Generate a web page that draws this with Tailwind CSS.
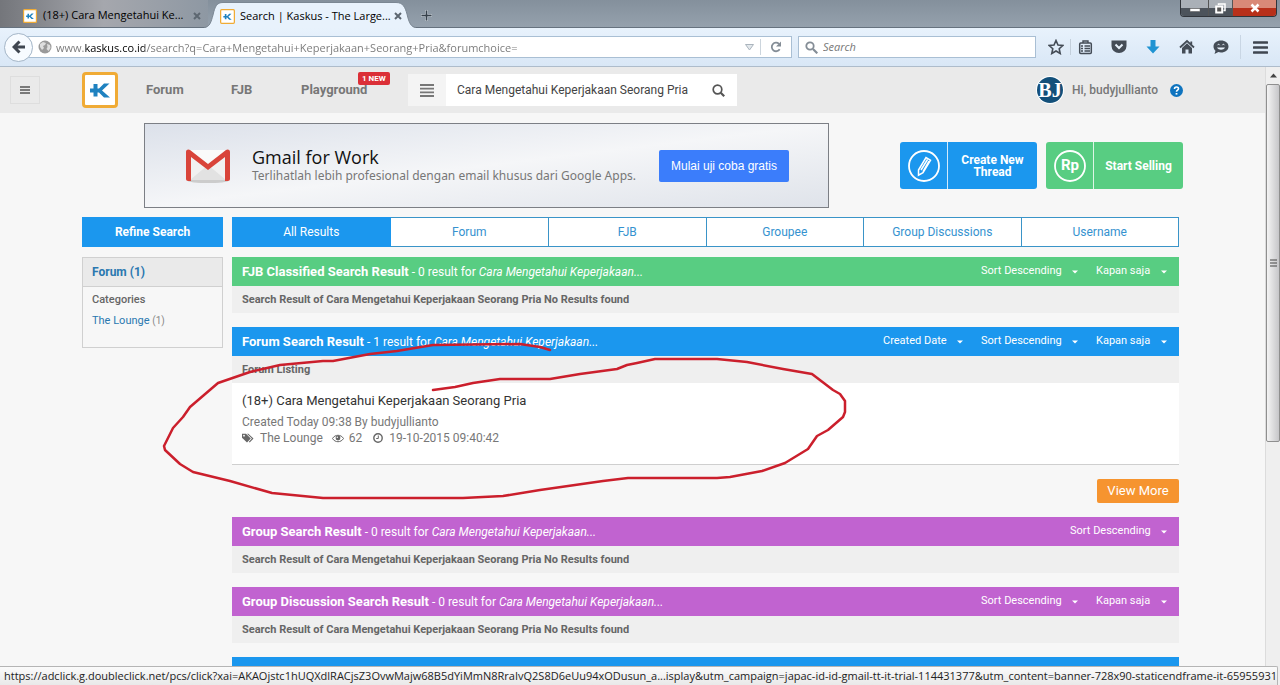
<!DOCTYPE html>
<html lang="id">
<head>
<meta charset="utf-8">
<title>Search | Kaskus - The Largest Indonesian Community</title>
<meta name="viewport" content="width=device-width, initial-scale=1">
<script src="https://cdn.jsdelivr.net/npm/@tailwindcss/browser@4"></script>
</head>
<body class="relative flex h-screen flex-col overflow-hidden bg-[#f7f7f7] font-['Roboto',sans-serif] text-xs text-[#666]">

<svg class="hidden" aria-hidden="true">
  <symbol id="kaskus" viewBox="0 0 36 36"><rect x="1.500" y="1.500" width="33" height="33" rx="2.500" fill="#fff" stroke="#f0ab35" stroke-width="3"/><path d="M8 16.500h3.500V12h4v4.500h1.500L22 11.500h5.500L20 18.500l8 7h-6l-5-5h-1.500v4h-4v-4H8z" fill="#1f82c0"/></symbol>
  <symbol id="close" viewBox="0 0 8 8"><path d="M1 1l6 6M7 1L1 7" stroke="#5d6771" stroke-width="2" fill="none"/></symbol>
  <symbol id="caret" viewBox="0 0 6 4"><path d="M0 .5h6L3 3.500z" fill="#fff"/></symbol>
</svg>

<!-- Tab strip -->
<div class="relative flex h-7 shrink-0 items-stretch border-b border-[#66727f] bg-linear-to-b from-[#84909c] to-[#95a1ad] font-['Open_Sans',sans-serif] text-[11px] text-black">
  <div class="flex w-[208px] items-center bg-linear-to-r from-[#74767b] via-[#a5a7ad] to-[#8e98a3] pt-1 pl-[23px]">
    <svg class="size-[14px] shrink-0" aria-hidden="true"><use href="#kaskus"/></svg>
    <a href="#" class="ml-[6px] w-[146px] whitespace-nowrap">(18+) Cara Mengetahui Ke...</a>
    <button aria-label="Close tab" class="ml-1"><svg class="size-2"><use href="#close"/></svg></button>
  </div>
  <div class="relative z-10 -mb-px flex w-[204px] items-center pt-1 pl-3">
    <svg class="absolute top-0 -left-1 h-7 w-[212px]" viewBox="0 0 212 28" preserveAspectRatio="none" aria-hidden="true"><path d="M0 28C6 27 7 22 9 15C11 6 13 2.500 19 2.500H192C199 2.500 201 7 203 14C205 23 207 27 212 28z" fill="#e8f2fc"/><path d="M0 27.500C6 27 7 22 9 15C11 6 13 2.500 19 2.500H192C199 2.500 201 7 203 14C205 23 207 27 212 27.500" fill="none" stroke="#7b8793"/></svg>
    <svg class="relative size-[15px] shrink-0" aria-hidden="true"><use href="#kaskus"/></svg>
    <a href="#" class="relative ml-[5px] w-[152px] whitespace-nowrap">Search | Kaskus - The Large...</a>
    <button aria-label="Close tab" class="relative ml-[2px]"><svg class="size-2"><use href="#close"/></svg></button>
  </div>
  <button aria-label="New tab" class="ml-[9px] pt-1"><svg class="size-[11px]" viewBox="0 0 11 11"><path d="M5.500 0v11M0 5.500h11" stroke="#eef2f6" stroke-width="3" opacity=".5"/><path d="M5.500 .5v10M.5 5.500h10" stroke="#37414b" stroke-width="1.500"/></svg></button>
  <div class="mr-[3px] ml-auto flex h-[17px] overflow-hidden rounded-b-[4px] border border-t-0 border-[#30343a]">
    <button aria-label="Minimize" class="flex w-7 items-end justify-center border-r border-[#555] bg-linear-to-b from-[#aab0b7] from-50% to-[#4c535b] to-50% pb-1"><svg class="h-1 w-3" viewBox="0 0 12 4"><rect x="1" y=".5" width="10" height="3" fill="#fff" stroke="#555" stroke-width=".5"/></svg></button>
    <button aria-label="Restore" class="flex w-6 items-center justify-center border-r border-[#555] bg-linear-to-b from-[#aab0b7] from-50% to-[#4c535b] to-50%"><svg class="size-[11px]" viewBox="0 0 11 11"><path d="M3.500 2V1H10v6.500H8.500" fill="none" stroke="#fff" stroke-width="1.500"/><rect x="1.200" y="3.500" width="6" height="6" fill="#555" stroke="#fff" stroke-width="2"/></svg></button>
    <button aria-label="Close window" class="flex w-[43px] items-center justify-center bg-linear-to-b from-[#d98a78] from-50% to-[#b8301a] to-50%"><svg class="size-[10px]" viewBox="0 0 10 10"><path d="M1.500 1.500l7 7M8.500 1.500l-7 7" stroke="#fff" stroke-width="2.500"/></svg></button>
  </div>
</div>

<!-- Navigation toolbar -->
<div class="flex h-[39px] shrink-0 items-center border-b border-[#aebccb] bg-linear-to-b from-[#e8f2fc] to-[#d9e7f6] font-['Open_Sans',sans-serif] text-[11px]">
  <button aria-label="Back" class="z-10 ml-1 flex size-[29px] shrink-0 items-center justify-center rounded-full border border-[#a3b5c7] bg-[#f7fbff]"><svg class="size-[14px]" viewBox="0 0 14 14"><path d="M7.500 1.500L2 7l5.500 5.500M2.500 7H13" fill="none" stroke="#3f4650" stroke-width="3"/></svg></button>
  <div class="-ml-3 flex h-[22px] flex-1 items-center border border-[#a9bfd4] bg-white pl-4">
    <svg class="size-[14px] shrink-0" viewBox="0 0 14 14" aria-hidden="true"><circle cx="7" cy="7" r="6.500" fill="#9a9a9a"/><path d="M2 4l3-2 3 1-1 2-2 1 1 2-2 2-2-3zM9 4l3 1 .5 3-2 3-2-2 1-2z" fill="#dedede"/></svg>
    <input aria-label="Address" value="www.kaskus.co.id/search?q=Cara+Mengetahui+Keperjakaan+Seorang+Pria&amp;forumchoice=" class="ml-1 h-full min-w-0 flex-1 bg-[linear-gradient(to_right,#777_28px,#000_28px,#000_89px,#777_89px)] bg-clip-text text-transparent outline-none">
    <button aria-label="Show history" class="px-[6px]"><svg class="h-[7px] w-[9px]" viewBox="0 0 9 7"><path d="M.5 .5h8L4.500 6z" fill="#e3e8ec" stroke="#aab4bd"/></svg></button>
    <span class="h-4 w-px bg-[#ccd5dd]"></span>
    <button aria-label="Reload" class="px-[9px]"><svg class="size-3" viewBox="0 0 12 12"><path d="M9.700 8.300A4.300 4.300 0 1 1 9 2.800" fill="none" stroke="#848d96" stroke-width="1.800"/><path d="M11 .5v5H6z" fill="#848d96"/></svg></button>
  </div>
  <label class="ml-[6px] flex h-[22px] w-[238px] items-center border border-[#a9bfd4] bg-white pl-[6px]">
    <svg class="size-[13px]" viewBox="0 0 13 13" aria-hidden="true"><circle cx="5" cy="5" r="3.700" fill="none" stroke="#848d96" stroke-width="1.800"/><path d="M8 8l4.300 4.300" stroke="#848d96" stroke-width="2.200"/></svg>
    <input aria-label="Web search" placeholder="Search" class="ml-[5px] min-w-0 flex-1 italic outline-none placeholder:text-[#777]">
  </label>
  <div class="flex items-center text-[#444c56]">
    <button aria-label="Bookmark" class="ml-3"><svg class="block size-4" viewBox="0 0 16 16"><path d="M8 1.500l2 4.500 4.800.5-3.600 3.200 1 4.800L8 12l-4.200 2.500 1-4.800L1.200 6.500 6 6z" fill="none" stroke="currentColor" stroke-width="1.600"/></svg></button>
    <span class="ml-[6px] h-4 w-px bg-[#c3cfdb]"></span>
    <button aria-label="Bookmarks list" class="ml-[7px]"><svg class="block size-[15px]" viewBox="0 0 15 15"><rect x="1.700" y="3" width="11.600" height="10.500" rx="1" fill="none" stroke="currentColor" stroke-width="1.500"/><path d="M5 3V1h5v2M3 6h2M6.500 6H12M3 8.500h2M6.500 8.500H12M3 11h2M6.500 11H12" fill="none" stroke="currentColor" stroke-width="1.400"/></svg></button>
    <button aria-label="Pocket" class="ml-[18px]"><svg class="block size-4" viewBox="0 0 16 16"><path d="M.5 1.500h15V7A7.500 7 0 0 1 .5 7z" fill="currentColor"/><path d="M4.500 5.500L8 9l3.500-3.500" fill="none" stroke="#e6f0fa" stroke-width="2"/></svg></button>
    <button aria-label="Downloads" class="ml-[18px]"><svg class="block size-4" viewBox="0 0 16 16"><path d="M5.500 1h5v6.500h4L8 14.500 1.500 7.500h4z" fill="#1f93d2"/></svg></button>
    <button aria-label="Home" class="ml-[18px]"><svg class="block size-4" viewBox="0 0 16 16"><path d="M1 8.500L8 2l7 6.500M12.300 2.500V6" fill="none" stroke="currentColor" stroke-width="1.800"/><path d="M3 9l5-4.700L13 9v5.500H9.500v-4h-3v4H3z" fill="currentColor"/></svg></button>
    <button aria-label="Chat" class="ml-[18px]"><svg class="block size-4" viewBox="0 0 16 16"><path d="M8 1.500c4.300 0 7.500 2.500 7.500 6s-3.200 6-7.500 6c-1 0-1.800-.1-2.600-.4L1.500 15l1-3.200C1.200 10.700.5 9.200.5 7.500c0-3.500 3.200-6 7.500-6z" fill="currentColor"/><path d="M4 8.500c1.500 3 6.500 3 8 0z" fill="#e6f0fa"/><path d="M4.500 6.200c.5-1.200 1.700-1.200 2.200 0M9.300 6.200c.5-1.200 1.700-1.200 2.200 0" fill="none" stroke="#e6f0fa"/></svg></button>
    <span class="ml-[11px] h-6 w-px bg-[#c9d6e4]"></span>
    <button aria-label="Menu" class="mr-3 ml-3"><svg class="block h-[13px] w-[15px]" viewBox="0 0 15 13"><path d="M1 1.500h13M1 6.500h13M1 11.500h13" stroke="#3f4650" stroke-width="2.600" stroke-linecap="round"/></svg></button>
  </div>
</div>

<div class="flex min-h-0 flex-1">
  <div class="flex min-w-0 flex-1 flex-col">
   <div class="min-h-0 flex-1 overflow-hidden">

    <!-- Site header -->
    <header class="flex h-[46px] items-center bg-[#eaeaea]">
      <button aria-label="Open sidebar" class="ml-[10px] flex h-7 w-[30px] items-center justify-center border border-[#dedede]"><svg class="h-2 w-[10px]" viewBox="0 0 10 8"><path d="M0 1h10M0 4h10M0 7h10" stroke="#555" stroke-width="1.300"/></svg></button>
      <a href="#" aria-label="Kaskus" class="ml-[42px]"><svg class="block size-9"><use href="#kaskus"/></svg></a>
      <nav class="ml-7 flex items-center text-[13px] font-bold text-[#777]">
        <a href="#" class="w-[85px]">Forum</a>
        <a href="#" class="w-[70px]">FJB</a>
        <a href="#" class="relative w-[107px]">Playground<span class="absolute -top-[9px] left-[57px] rounded-[2px] bg-[#db2f37] px-[4px] text-[8px] leading-[13px] font-bold whitespace-nowrap text-white">1 NEW</span></a>
      </nav>
      <form class="flex h-8 w-[329px] items-stretch bg-white">
        <button type="button" aria-label="Search categories" class="flex w-[38px] items-center justify-center bg-[#f4f4f4]"><svg class="h-[13px] w-[14px]" viewBox="0 0 14 13"><path d="M0 1h14M0 4.700h14M0 8.300h14M0 12h14" stroke="#777" stroke-width="1.800"/></svg></button>
        <input aria-label="Search Kaskus" value="Cara Mengetahui Keperjakaan Seorang Pria" class="min-w-0 flex-1 pl-[11px] text-[12px] text-[#444] outline-none">
        <button type="button" aria-label="Search" class="mr-3"><svg class="size-[13px]" viewBox="0 0 13 13"><circle cx="5.500" cy="5.500" r="4.300" fill="none" stroke="#555" stroke-width="1.700"/><path d="M8.700 8.700l3.500 3.500" stroke="#555" stroke-width="2.200"/></svg></button>
      </form>
      <a href="#" class="ml-auto flex items-center gap-2 font-medium text-[#777]">
        <svg class="size-7" viewBox="0 0 28 28" role="img" aria-label="BJ"><circle cx="14" cy="14" r="14" fill="#fff"/><circle cx="14" cy="14" r="13" fill="#13507a"/><text x="14" y="21" text-anchor="middle" font-family="Liberation Serif, serif" font-weight="bold" font-size="20" fill="#fff">BJ</text></svg>
        <span>Hi, budyjullianto</span>
      </a>
      <button aria-label="Help" class="mr-[82px] ml-3"><svg class="block size-[13px]" viewBox="0 0 13 13"><circle cx="6.500" cy="6.500" r="6.500" fill="#0f74bf"/><path d="M4.500 5c0-2.600 4-2.600 4-.2 0 1.400-2 1.400-2 3" fill="none" stroke="#fff" stroke-width="1.600"/><rect x="5.600" y="9" width="1.800" height="1.600" fill="#fff"/></svg></button>
    </header>

    <main class="mx-auto flex max-w-[1101px] flex-col pt-[10px]">
      <!-- Advertisement and main actions -->
      <div class="flex items-center">
        <a href="#" class="ml-[62px] flex h-[85px] w-[685px] shrink-0 items-center border border-[#7c7f85] bg-linear-to-br from-[#dce1ea] via-[#f5f6f8] to-[#dfe3ea] pl-10">
          <svg class="h-9 w-[46px]" viewBox="0 0 46 36" aria-hidden="true"><ellipse cx="23" cy="33" rx="20" ry="2" fill="#ccc"/><path d="M3 2h40v30H3z" fill="#f1f1f1"/><path d="M5 32l18-15 18 15z" fill="#e2e2e2"/><path d="M5 2h36L23 16z" fill="#fafafa"/><path d="M1 4c0-3 3-3 4-2l18 14L41 2c1-1 4-1 4 2v27c0 1-1 2-2 2h-3V9L23 22 6 9v24H3c-1 0-2-1-2-2z" fill="#d9443a"/></svg>
          <span class="ml-[21px] w-[407px] font-['Open_Sans',sans-serif] whitespace-nowrap">
            <span class="block text-[18px] leading-5 text-[#111]">Gmail for Work</span>
            <span class="block font-['Noto_Sans',sans-serif] text-[12px] leading-[18px] text-[#777]">Terlihatlah lebih profesional dengan email khusus dari Google Apps.</span>
          </span>
          <span class="flex h-8 w-[130px] items-center justify-center rounded-[2px] bg-[#3b7dfb] font-['Liberation_Sans',sans-serif] text-[12px] text-white">Mulai uji coba gratis</span>
        </a>
        <a href="#" class="ml-auto flex h-[47px] w-[137px] items-stretch rounded-[3px] bg-[#1b97ee] text-[12px] leading-3 font-bold text-white">
          <span class="flex w-12 items-center justify-center border-r border-white/80"><svg class="size-8" viewBox="0 0 32 32" aria-hidden="true"><circle cx="16" cy="16" r="15" fill="none" stroke="#fff" stroke-width="1.800"/><path d="M10.500 20L18 7.500l4.500 2.700L15 22.700l-4.500 2.500zM13 20l6.500-10.500M15 21.500L21 11" fill="none" stroke="#fff" stroke-width="1.500"/></svg></span>
          <span class="flex flex-1 items-center justify-center text-center">Create New<br>Thread</span>
        </a>
        <a href="#" class="ml-[9px] flex h-[47px] w-[137px] items-stretch rounded-[3px] bg-[#58cd82] text-[12px] font-bold text-white">
          <span class="flex w-12 items-center justify-center border-r border-white/80"><svg class="size-8" viewBox="0 0 32 32" role="img" aria-label="Rp"><circle cx="16" cy="16" r="15" fill="none" stroke="#fff" stroke-width="1.800"/><text x="16" y="20" text-anchor="middle" font-family="Roboto, sans-serif" font-weight="bold" font-size="15" fill="#fff">Rp</text></svg></span>
          <span class="flex flex-1 items-center justify-center">Start Selling</span>
        </a>
      </div>

      <div class="mt-[9px] mr-1 flex items-start gap-[9px]">
        <!-- Filters -->
        <aside class="w-[141px] shrink-0">
          <button class="h-[30px] w-full bg-[#1b97ee] text-[12px] font-bold text-white">Refine Search</button>
          <div class="mt-[10px] h-[91px] border border-[#d0d0d0]">
            <h2 class="border-b border-[#d0d0d0] bg-[#eaeaea] pl-[9px] text-[12px] leading-7 font-bold text-[#2a78b0]">Forum (1)</h2>
            <div class="pl-[9px] text-[11px] leading-[21px]">
              <p class="pt-[2px] font-medium">Categories</p>
              <p><a href="#" class="text-[#2a78b0]">The Lounge</a> <span class="text-[10px] text-[#888]">(1)</span></p>
            </div>
          </div>
        </aside>

        <div class="min-w-0 flex-1">
          <nav class="grid h-[30px] grid-cols-6 border border-[#3a94c8] bg-white text-center text-[12px] leading-[29px] text-[#3592cf]">
            <a href="#" class="-my-px -ml-px h-[30px] bg-[#1b97ee] leading-[31px] text-white">All Results</a>
            <a href="#">Forum</a>
            <a href="#" class="border-l border-[#3a94c8]">FJB</a>
            <a href="#" class="border-l border-[#3a94c8]">Groupee</a>
            <a href="#" class="border-l border-[#3a94c8]">Group Discussions</a>
            <a href="#" class="border-l border-[#3a94c8]">Username</a>
          </nav>

          <section class="mt-[10px]">
            <div class="flex h-[29px] items-center bg-[#58cd82] pr-3 pl-[10px] text-[11px] text-white">
              <h2 class="flex-1 text-[12px]"><b class="text-[13px]">FJB Classified Search Result</b> - 0 result for <i>Cara Mengetahui Keperjakaan...</i></h2>
              <label class="flex items-center gap-[10px]"><select aria-label="Sort order" class="appearance-none outline-none"><option>Sort Descending</option></select><svg class="h-1 w-[6px]"><use href="#caret"/></svg></label>
              <label class="ml-[18px] flex items-center gap-[10px]"><select aria-label="Period" class="appearance-none outline-none"><option>Kapan saja</option></select><svg class="h-1 w-[6px]"><use href="#caret"/></svg></label>
            </div>
            <p class="bg-[#efefef] pl-[10px] text-[11px] leading-[27px] font-bold">Search Result of Cara Mengetahui Keperjakaan Seorang Pria No Results found</p>
          </section>

          <section class="mt-[14px]">
            <div class="flex h-[29px] items-center bg-[#1b97ee] pr-3 pl-[10px] text-[11px] text-white">
              <h2 class="flex-1 text-[12px]"><b class="text-[13px]">Forum Search Result</b> - 1 result for <i>Cara Mengetahui Keperjakaan...</i></h2>
              <label class="flex items-center gap-[10px]"><select aria-label="Sort by" class="appearance-none outline-none"><option>Created Date</option></select><svg class="h-1 w-[6px]"><use href="#caret"/></svg></label>
              <label class="ml-[18px] flex items-center gap-[10px]"><select aria-label="Sort order" class="appearance-none outline-none"><option>Sort Descending</option></select><svg class="h-1 w-[6px]"><use href="#caret"/></svg></label>
              <label class="ml-[18px] flex items-center gap-[10px]"><select aria-label="Period" class="appearance-none outline-none"><option>Kapan saja</option></select><svg class="h-1 w-[6px]"><use href="#caret"/></svg></label>
            </div>
            <p class="bg-[#efefef] pl-[10px] text-[11px] leading-[27px] font-bold">Forum Listing</p>
            <article class="h-[82px] border-b border-[#cfcfcf] bg-white pt-[9px] pl-[10px] text-[12px] leading-4 text-[#777]">
              <h3 class="pb-1 text-[13px] leading-[18px] text-[#333]"><a href="#">(18+) Cara Mengetahui Keperjakaan Seorang Pria</a></h3>
              <p>Created Today 09:38 By budyjullianto</p>
              <p class="flex items-center">
                <svg class="h-[10px] w-3" viewBox="0 0 12 10" aria-hidden="true"><path d="M0 .8h4l4.800 4.700-3.800 3.900L0 4.700zM5 .8h1.300l5.200 4.700L7.700 9.400l-.8-.7 3-3.200z" fill="#666"/><circle cx="2" cy="2.700" r=".9" fill="#fff"/></svg>
                <a href="#" class="ml-[6px]">The Lounge</a>
                <svg class="ml-[9px] h-[9px] w-3" viewBox="0 0 12 9" aria-hidden="true"><path d="M.5 4.500C3 .2 9 .2 11.500 4.500 9 8.800 3 8.800.5 4.500z" fill="none" stroke="#666"/><circle cx="6" cy="4" r="2.400" fill="#666"/><circle cx="5.300" cy="3.300" r=".7" fill="#fff"/></svg>
                <span class="ml-[5px]">62</span>
                <svg class="ml-[11px] size-[10px]" viewBox="0 0 10 10" aria-hidden="true"><circle cx="5" cy="5" r="4.200" fill="none" stroke="#666" stroke-width="1.400"/><path d="M5.300 2.500v3H3.200" fill="none" stroke="#666"/></svg>
                <span class="ml-[6px]">19-10-2015 09:40:42</span>
              </p>
            </article>
          </section>

          <div class="mt-[14px] flex justify-end"><button class="h-6 w-[82px] rounded-[2px] bg-[#f6942f] text-[13px] text-white">View More</button></div>

          <section class="mt-[14px]">
            <div class="flex h-[29px] items-center bg-[#c163d0] pr-3 pl-[10px] text-[11px] text-white">
              <h2 class="flex-1 text-[12px]"><b class="text-[13px]">Group Search Result</b> - 0 result for <i>Cara Mengetahui Keperjakaan...</i></h2>
              <label class="flex items-center gap-[10px]"><select aria-label="Sort order" class="appearance-none outline-none"><option>Sort Descending</option></select><svg class="h-1 w-[6px]"><use href="#caret"/></svg></label>
            </div>
            <p class="bg-[#efefef] pl-[10px] text-[11px] leading-[27px] font-bold">Search Result of Cara Mengetahui Keperjakaan Seorang Pria No Results found</p>
          </section>

          <section class="mt-[14px]">
            <div class="flex h-[29px] items-center bg-[#c163d0] pr-3 pl-[10px] text-[11px] text-white">
              <h2 class="flex-1 text-[12px]"><b class="text-[13px]">Group Discussion Search Result</b> - 0 result for <i>Cara Mengetahui Keperjakaan...</i></h2>
              <label class="flex items-center gap-[10px]"><select aria-label="Sort order" class="appearance-none outline-none"><option>Sort Descending</option></select><svg class="h-1 w-[6px]"><use href="#caret"/></svg></label>
              <label class="ml-[18px] flex items-center gap-[10px]"><select aria-label="Period" class="appearance-none outline-none"><option>Kapan saja</option></select><svg class="h-1 w-[6px]"><use href="#caret"/></svg></label>
            </div>
            <p class="bg-[#efefef] pl-[10px] text-[11px] leading-[27px] font-bold">Search Result of Cara Mengetahui Keperjakaan Seorang Pria No Results found</p>
          </section>

          <section class="mt-[14px]">
            <div class="flex h-[30px] items-center bg-[#1b97ee] pl-[10px] text-[11px] text-white">
              <h2><b class="text-[13px]">Username Search Result</b></h2>
            </div>
          </section>
        </div>
      </div>
    </main>
   </div>

    <!-- Link address shown while hovering -->
    <div class="z-10 h-[19px] w-max shrink-0 rounded-tr-[2px] border-t border-r border-[#b5b5b5] bg-linear-to-b from-[#fbfbfb] to-[#e9e9e9] pl-1 font-['Open_Sans',sans-serif] text-[11px] leading-[18px] whitespace-nowrap text-[#222]">https://adclick.g.doubleclick.net/pcs/click?xai=AKAOjstc1hUQXdlRACjsZ3OvwMajw68B5dYiMmN8RraIvQ2S8D6eUu94xODusun_a...isplay&amp;utm_campaign=japac-id-id-gmail-tt-it-trial-114431377&amp;utm_content=banner-728x90-staticendframe-it-65955931</div>
  </div>

  <!-- Scrollbar -->
  <div class="flex w-[15px] shrink-0 flex-col items-center border-l border-[#dcdcdc] bg-[#efefef]" aria-hidden="true">
    <svg class="h-[17px] w-[7px]" viewBox="0 0 7 17"><path d="M0 10.500h7L3.500 6.500z" fill="#444"/></svg>
    <div class="flex h-[358px] w-full items-center justify-center rounded-[2px] border border-[#8f8f8f] bg-linear-to-r from-[#f4f4f4] to-[#c6c6c9]"><svg class="h-2 w-[7px]" viewBox="0 0 7 8"><path d="M0 1h7M0 4h7M0 7h7" stroke="#444"/></svg></div>
    <svg class="mt-auto h-[17px] w-[7px]" viewBox="0 0 7 17"><path d="M0 7h7L3.500 11z" fill="#444"/></svg>
  </div>
</div>

<!-- Hand-drawn marking over the result -->
<svg class="pointer-events-none absolute top-[340px] left-[160px] h-[162px] w-[690px]" viewBox="160 340 690 162" fill="none" stroke="#cb1f2c" stroke-width="2.500" stroke-linecap="round" stroke-linejoin="round" aria-hidden="true"><path d="M433 390L455 387 473 383 500 379 550 379 580 374 617 369 627 365 637 363 655 359 717 359 747 362 783 369 812 374 833 390 840 394 845 401 845 412 843 417 828 430 817 436 808 449 785 463 762 471 730 477 717 478 628 478 603 481 540 490 503 496 463 498 323 498 272 493 230 481 193 472 180 464 165 450 164 446 173 428 183 417 190 407 218 383 250 372 280 365 323 361 333 361 370 354 397 351 433 345 520 344 540 347 550 350"/></svg>
</body>
</html>
